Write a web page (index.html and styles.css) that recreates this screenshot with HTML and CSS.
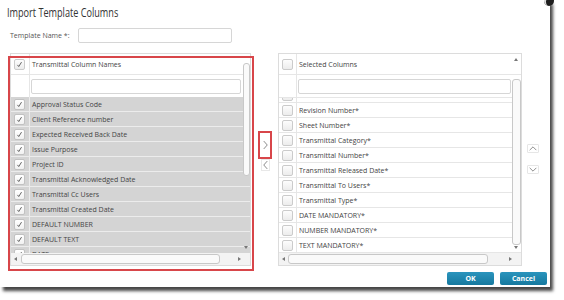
FILE: index.html
```html
<!DOCTYPE html>
<html>
<head>
<meta charset="utf-8">
<link rel="stylesheet" href="styles.css">
</head>
<body>
<div class="dialog">
  <span class="close-dot"></span>
  <h1 class="title"><span class="title-text">Import Template Columns</span></h1>
  <div class="name-row">
    <label class="name-label">Template Name *:</label>
    <span class="text-input name-input"></span>
  </div>
  <div class="lists">
    <div class="grid grid-left">
      <div class="grid-inner">
        <div class="g-row g-head">
          <div class="g-check"><span class="cb checked"><svg viewBox="0 0 11 11"><polyline points="3,6 4.6,8 8,2.6"/></svg></span></div>
          <div class="g-text">Transmittal Column Names</div>
        </div>
        <div class="g-row g-filter">
          <div class="g-check"></div>
          <div class="g-text"><span class="text-input filter-input"></span></div>
        </div>
        <div class="g-body">
          <div class="g-rows">
            <div class="g-row sel"><div class="g-check"><span class="cb checked"><svg viewBox="0 0 11 11"><polyline points="3,6 4.6,8 8,2.6"/></svg></span></div><div class="g-text">Approval Status Code</div></div>
            <div class="g-row sel"><div class="g-check"><span class="cb checked"><svg viewBox="0 0 11 11"><polyline points="3,6 4.6,8 8,2.6"/></svg></span></div><div class="g-text">Client Reference number</div></div>
            <div class="g-row sel"><div class="g-check"><span class="cb checked"><svg viewBox="0 0 11 11"><polyline points="3,6 4.6,8 8,2.6"/></svg></span></div><div class="g-text">Expected Received Back Date</div></div>
            <div class="g-row sel"><div class="g-check"><span class="cb checked"><svg viewBox="0 0 11 11"><polyline points="3,6 4.6,8 8,2.6"/></svg></span></div><div class="g-text">Issue Purpose</div></div>
            <div class="g-row sel"><div class="g-check"><span class="cb checked"><svg viewBox="0 0 11 11"><polyline points="3,6 4.6,8 8,2.6"/></svg></span></div><div class="g-text">Project ID</div></div>
            <div class="g-row sel"><div class="g-check"><span class="cb checked"><svg viewBox="0 0 11 11"><polyline points="3,6 4.6,8 8,2.6"/></svg></span></div><div class="g-text">Transmittal Acknowledged Date</div></div>
            <div class="g-row sel"><div class="g-check"><span class="cb checked"><svg viewBox="0 0 11 11"><polyline points="3,6 4.6,8 8,2.6"/></svg></span></div><div class="g-text">Transmittal Cc Users</div></div>
            <div class="g-row sel"><div class="g-check"><span class="cb checked"><svg viewBox="0 0 11 11"><polyline points="3,6 4.6,8 8,2.6"/></svg></span></div><div class="g-text">Transmittal Created Date</div></div>
            <div class="g-row sel"><div class="g-check"><span class="cb checked"><svg viewBox="0 0 11 11"><polyline points="3,6 4.6,8 8,2.6"/></svg></span></div><div class="g-text">DEFAULT NUMBER</div></div>
            <div class="g-row sel"><div class="g-check"><span class="cb checked"><svg viewBox="0 0 11 11"><polyline points="3,6 4.6,8 8,2.6"/></svg></span></div><div class="g-text">DEFAULT TEXT</div></div>
            <div class="g-row sel"><div class="g-check"><span class="cb checked"><svg viewBox="0 0 11 11"><polyline points="3,6 4.6,8 8,2.6"/></svg></span></div><div class="g-text">DATE</div></div>
          </div>
        </div>
        <div class="hscroll">
          <span class="arr arr-l"></span>
          <span class="h-thumb left-h"></span>
          <span class="arr arr-r"></span>
        </div>
        <div class="vscroll vs-left">
          <span class="v-thumb left-v"></span>
          <span class="arr arr-d"></span>
        </div>
      </div>
      <span class="annot annot-grid"></span>
    </div>

    <div class="movers">
      <span class="mv mv-add"><svg viewBox="0 0 8 11"><polyline points="2,1 6,5.5 2,10"/></svg><span class="annot annot-btn"></span></span>
      <span class="mv mv-rem"><svg viewBox="0 0 8 11"><polyline points="6,1 2,5.5 6,10"/></svg></span>
    </div>

    <div class="grid grid-right">
      <div class="grid-inner">
        <div class="g-row g-head">
          <div class="g-check"><span class="cb"></span></div>
          <div class="g-text">Selected Columns</div>
        </div>
        <div class="g-row g-filter">
          <div class="g-check"></div>
          <div class="g-text"><span class="text-input filter-input"></span></div>
        </div>
        <div class="g-body">
          <div class="g-rows scrolled">
            <div class="g-row"><div class="g-check"><span class="cb"></span></div><div class="g-text"></div></div>
            <div class="g-row"><div class="g-check"><span class="cb"></span></div><div class="g-text">Revision Number*</div></div>
            <div class="g-row"><div class="g-check"><span class="cb"></span></div><div class="g-text">Sheet Number*</div></div>
            <div class="g-row"><div class="g-check"><span class="cb"></span></div><div class="g-text">Transmittal Category*</div></div>
            <div class="g-row"><div class="g-check"><span class="cb"></span></div><div class="g-text">Transmittal Number*</div></div>
            <div class="g-row"><div class="g-check"><span class="cb"></span></div><div class="g-text">Transmittal Released Date*</div></div>
            <div class="g-row"><div class="g-check"><span class="cb"></span></div><div class="g-text">Transmittal To Users*</div></div>
            <div class="g-row"><div class="g-check"><span class="cb"></span></div><div class="g-text">Transmittal Type*</div></div>
            <div class="g-row"><div class="g-check"><span class="cb"></span></div><div class="g-text">DATE MANDATORY*</div></div>
            <div class="g-row"><div class="g-check"><span class="cb"></span></div><div class="g-text">NUMBER MANDATORY*</div></div>
            <div class="g-row"><div class="g-check"><span class="cb"></span></div><div class="g-text">TEXT MANDATORY*</div></div>
          </div>
        </div>
        <div class="hscroll">
          <span class="arr arr-l"></span>
          <span class="h-thumb right-h"></span>
          <span class="arr arr-r"></span>
        </div>
        <div class="vscroll vs-right">
          <span class="arr arr-u"></span>
          <span class="v-thumb right-v"></span>
          <span class="arr arr-d"></span>
        </div>
      </div>
    </div>

    <div class="orders">
      <span class="ord"><svg viewBox="0 0 12 9"><polyline points="2,6.5 6,2.5 10,6.5"/></svg></span>
      <span class="ord ord-down"><svg viewBox="0 0 12 9"><polyline points="2,2.5 6,6.5 10,2.5"/></svg></span>
    </div>
  </div>
  <div class="footer">
    <span class="btn">OK</span>
    <span class="btn">Cancel</span>
  </div>
</div>
</body>
</html>
```

FILE: styles.css
```css
* { box-sizing: border-box; }
html, body { margin: 0; padding: 0; background: #fff; }
body {
  font-family: "Open Sans", "DejaVu Sans", sans-serif;
  color: #444;
  width: 564px;
  height: 300px;
  overflow: hidden;
}
.dialog {
  position: relative;
  width: 550px;
  height: 287px;
  background: #fff;
  box-shadow: 3px 4px 3px rgba(0,0,0,0.72);
}
.close-dot {
  position: absolute;
  left: 544px;
  top: -4px;
  width: 10px;
  height: 10px;
  border-radius: 50%;
  background: #1e1e1e;
  box-shadow: inset 3px 1px 0 -1px #ddd;
}
.title {
  margin: 0;
  height: 24px;
  line-height: 25px;
  padding-left: 7px;
  font-size: 12.5px;
  font-weight: 400;
  color: #333;
  white-space: nowrap;
}
.title-text {
  display: inline-block;
  transform: scaleX(0.73);
  transform-origin: left center;
}
.name-row {
  display: flex;
  align-items: center;
  height: 15px;
  margin-top: 4px;
  padding-left: 10px;
}
.name-label {
  font-size: 7px;
  color: #555;
  width: 68px;
}
.text-input {
  display: block;
  height: 15px;
  border: 1px solid #d6d6d6;
  border-radius: 2px;
  background: #fff;
}
.name-input { width: 154px; }

.lists {
  display: flex;
  margin-top: 10px;
  padding-left: 10px;
  height: 213px;
}
.grid {
  position: relative;
  height: 213px;
  border: 1px solid #dcdcdc;
}
.grid-left { width: 241px; }
.grid-right { width: 244px; }
.grid-inner {
  position: relative;
  display: flex;
  flex-direction: column;
  height: 100%;
  overflow: hidden;
}
.g-row {
  display: flex;
  height: 15px;
  border-bottom: 1px solid #e6e6e6;
  font-size: 7px;
  color: #444;
  flex: none;
}
.g-check {
  width: 19px;
  flex: none;
  border-right: 1px solid #e6e6e6;
  display: flex;
  align-items: center;
  padding-left: 3px;
}
.grid-right .g-check { width: 18px; }
.g-text {
  flex: 1;
  display: flex;
  align-items: center;
  padding-left: 2px;
  white-space: nowrap;
  overflow: hidden;
}
.g-head { height: 21px; }
.g-filter { height: 22px; border-bottom: none; }
.g-filter .g-text { padding: 0 9px 0 1px; }
.grid-right .g-filter .g-text { padding-right: 10px; }
.filter-input { width: 100%; }
.g-body {
  height: 156px;
  overflow: hidden;
  flex: none;
}
.g-rows.scrolled { margin-top: -10px; }
.grid-right .g-body { border-top: 1px solid #e6e6e6; }
.g-row.sel { background: #d4d4d4; border-bottom-color: #ececec; }
.g-row.sel .g-check { border-right-color: #ececec; }

.cb {
  display: block;
  width: 11px;
  height: 11px;
  border: 1px solid #cbcbcb;
  border-radius: 2px;
  background: linear-gradient(#fdfdfd, #ececec);
}
.cb svg { display: block; width: 9px; height: 9px; }
.cb polyline { fill: none; stroke: #444; stroke-width: 1; }
.sel .cb { border-color: #c2c2c2; background: linear-gradient(#fff, #f1f1f1); }

.hscroll {
  height: 12px;
  flex: none;
  display: flex;
  align-items: center;
  background: #f3f3f3;
  padding: 0 3px;
}
.h-thumb {
  display: block;
  height: 10px;
  border: 1px solid #c8c8c8;
  border-radius: 3px;
  background: #fafafa;
}
.left-h { width: 199px; margin-left: 4px; }
.right-h { width: 200px; margin-left: 3px; }
.arr { display: block; width: 0; height: 0; border-style: solid; border-color: transparent; }
.arr-l { border-width: 2.5px 3px 2.5px 0; border-right-color: #777; }
.arr-r { border-width: 2.5px 0 2.5px 3px; border-left-color: #777; margin-left: auto; margin-right: 6px; }
.arr-d { border-width: 3px 2.5px 0 2.5px; border-top-color: #777; }
.arr-u { border-width: 0 2.5px 3px 2.5px; border-bottom-color: #777; }

.vscroll {
  position: absolute;
  right: 0;
  top: 0;
  bottom: 12px;
  display: flex;
  flex-direction: column;
  align-items: center;
}
.vs-left { width: 8px; }
.vs-right { width: 10px; }
.v-thumb {
  display: block;
  width: 100%;
  border: 1px solid #c8c8c8;
  border-radius: 3px;
  background: #fafafa;
}
.left-v { margin-top: 9px; height: 113px; width: 7px; }
.right-v { margin-top: 18px; height: 166px; width: 9px; }
.vs-left .arr-d { margin-top: auto; margin-bottom: 4px; }
.vs-right .arr-u { margin-top: 4px; }
.vs-right .arr-d { margin-top: auto; margin-bottom: 4px; }

.annot {
  position: absolute;
  border: 2px solid #d8464a;
  pointer-events: none;
}
.annot-grid { left: -3px; top: 2px; width: 246px; height: 215px; }

.movers {
  width: 27px;
  display: flex;
  flex-direction: column;
  align-items: center;
  padding-top: 79px;
  padding-left: 1px;
}
.mv {
  position: relative;
  display: flex;
  align-items: center;
  justify-content: center;
  width: 9px;
  height: 12px;
}
.mv svg { width: 7px; height: 10px; }
.mv polyline { fill: none; stroke: #7a7a7a; stroke-width: 1; }
.annot-btn { left: -3px; top: -8px; width: 14px; height: 28px; }
.mv-add { margin-top: 7px; }
.mv-rem { margin-top: 8px; border: 1px solid #e8e8e8; }

.orders {
  width: 28px;
  display: flex;
  flex-direction: column;
  padding-left: 5px;
  padding-top: 91px;
}
.ord {
  display: flex;
  align-items: center;
  justify-content: center;
  width: 12px;
  height: 9px;
  border: 1px solid #e6e6e6;
  border-radius: 1px;
}
.ord svg { width: 12px; height: 9px; }
.ord polyline { fill: none; stroke: #7a7a7a; stroke-width: 1; }
.ord-down { margin-top: 12px; }

.footer {
  display: flex;
  justify-content: flex-end;
  gap: 6px;
  margin-top: 6px;
  padding-right: 3px;
}
.btn {
  display: flex;
  align-items: center;
  justify-content: center;
  width: 47px;
  height: 13px;
  border-radius: 2px;
  background: linear-gradient(#2a94bd, #16799f);
  color: #fff;
  font-size: 7px;
  font-weight: 700;
}
```
